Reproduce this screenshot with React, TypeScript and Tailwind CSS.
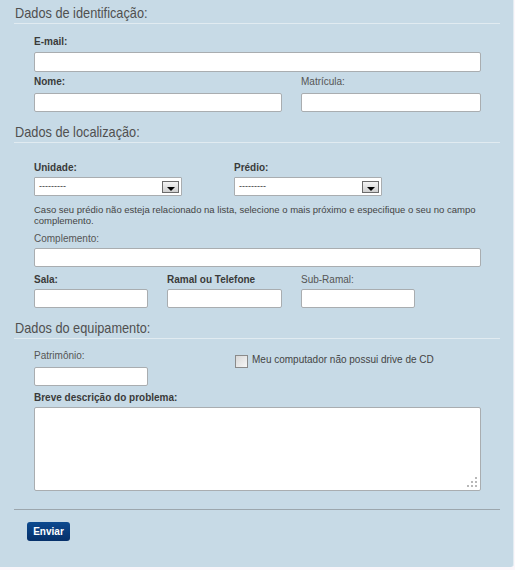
const font = { fontFamily: '"Liberation Sans", Arial, sans-serif' };

const Heading = ({ children, className = "" }: { children: React.ReactNode; className?: string }) => (
  <div className={`ml-[14px] mr-[13px] h-[20px] border-b border-[#e1ebf1] pl-px text-[15px] leading-[17px] text-[#505050] ${className}`}>
    <span className="inline-block origin-left scale-x-[0.85] whitespace-nowrap">{children}</span>
  </div>
);

const Label = ({ children, bold = false, className = "" }: { children: React.ReactNode; bold?: boolean; className?: string }) => (
  <div className={`text-[10px] leading-[12px] ${bold ? "font-bold text-[#3a3a3a]" : "text-[#555]"} ${className}`}>
    {children}
  </div>
);

const Input = ({ w, className = "" }: { w: string; className?: string }) => (
  <input
    type="text"
    className={`block h-[19px] ${w} rounded-[2px] border border-[#a9adb0] bg-white outline-none ${className}`}
  />
);

const Select = () => (
  <div className="flex h-[19px] w-[148px] items-center justify-between rounded-[1px] border border-[#a9adb0] bg-white pl-[4px] pr-[2px]">
    <span className="text-[9px] leading-none text-[#333]">---------</span>
    <span className="flex h-[12px] w-[17px] items-end justify-center border border-[#6b6b6b] bg-gradient-to-b from-[#f4f4f4] to-[#cfcfcf] pb-[1px]">
      <span className="h-0 w-0 border-x-[4px] border-t-[4px] border-x-transparent border-t-black" />
    </span>
  </div>
);

export default function App() {
  return (
    <div className="min-h-[570px] bg-[#fcf7fb]" style={font}>
      <div className="h-[567px] w-[514px] rounded-br-[3px] border-r border-[#e4edf2] bg-[#c7dae6] pt-[4px]">
        <Heading>Dados de identificação:</Heading>

        <div className="pl-[34px] pr-[32px]">
          <Label bold className="mt-[12px]">E-mail:</Label>
          <Input w="w-[447px]" className="mt-[4px] h-[20px]" />

          <div className="mt-[4px] flex gap-[19px]">
            <div>
              <Label bold>Nome:</Label>
              <Input w="w-[248px]" className="mt-[5px]" />
            </div>
            <div>
              <Label>Matrícula:</Label>
              <Input w="w-[180px]" className="mt-[5px]" />
            </div>
          </div>
        </div>

        <Heading className="mt-[11px]">Dados de localização:</Heading>

        <div className="pl-[34px] pr-[32px]">
          <div className="mt-[19px] flex gap-[52px]">
            <div>
              <Label bold>Unidade:</Label>
              <div className="mt-[3px]">
                <Select />
              </div>
            </div>
            <div>
              <Label bold>Prédio:</Label>
              <div className="mt-[3px]">
                <Select />
              </div>
            </div>
          </div>

          <p className="mt-[8px] text-[9.5px] leading-[11px] text-[#444]">
            Caso seu prédio não esteja relacionado na lista, selecione o mais próximo e especifique o seu no campo complemento.
          </p>

          <Label className="mt-[7px]">Complemento:</Label>
          <Input w="w-[447px]" className="mt-[3px]" />

          <div className="mt-[7px] flex gap-[19px]">
            <div>
              <Label bold>Sala:</Label>
              <Input w="w-[114px]" className="mt-[3px]" />
            </div>
            <div>
              <Label bold>Ramal ou Telefone</Label>
              <Input w="w-[115px]" className="mt-[3px]" />
            </div>
            <div>
              <Label>Sub-Ramal:</Label>
              <Input w="w-[114px]" className="mt-[3px]" />
            </div>
          </div>
        </div>

        <Heading className="mt-[11px]">Dados do equipamento:</Heading>

        <div className="pl-[34px] pr-[32px]">
          <div className="mt-[11px] flex">
            <div className="w-[201px]">
              <Label>Patrimônio:</Label>
              <Input w="w-[114px]" className="mt-[5px]" />
            </div>
            <label className="mt-[4px] flex h-[14px] items-center gap-[4px]">
              <span className="block h-[13px] w-[13px] border border-[#8a8a8a] bg-gradient-to-br from-[#d8d8d8] to-[#f6f6f6]" />
              <span className="-mt-[2px] text-[10px] leading-[12px] text-[#444]">Meu computador não possui drive de CD</span>
            </label>
          </div>

          <Label bold className="mt-[6px]">Breve descrição do problema:</Label>
          <div className="relative mt-[3px] h-[84px] w-[447px] rounded-[2px] border border-[#a9adb0] bg-white">
            <svg className="absolute bottom-[3px] right-[3px]" width="10" height="10" viewBox="0 0 10 10">
              <rect x="8" y="0" width="2" height="2" fill="#b8b8b8" />
              <rect x="4" y="4" width="2" height="2" fill="#b8b8b8" />
              <rect x="8" y="4" width="2" height="2" fill="#b8b8b8" />
              <rect x="0" y="8" width="2" height="2" fill="#b8b8b8" />
              <rect x="4" y="8" width="2" height="2" fill="#b8b8b8" />
              <rect x="8" y="8" width="2" height="2" fill="#b8b8b8" />
            </svg>
          </div>
        </div>

        <div className="ml-[14px] mr-[13px] mt-[18px] border-t border-[#9ca6ad]" />

        <div className="pl-[27px]">
          <button className="mt-[12px] h-[19px] w-[43px] rounded-[3px] bg-gradient-to-b from-[#0d4a8f] to-[#06306a] text-[10px] font-bold text-white">
            Enviar
          </button>
        </div>
      </div>
    </div>
  );
}
